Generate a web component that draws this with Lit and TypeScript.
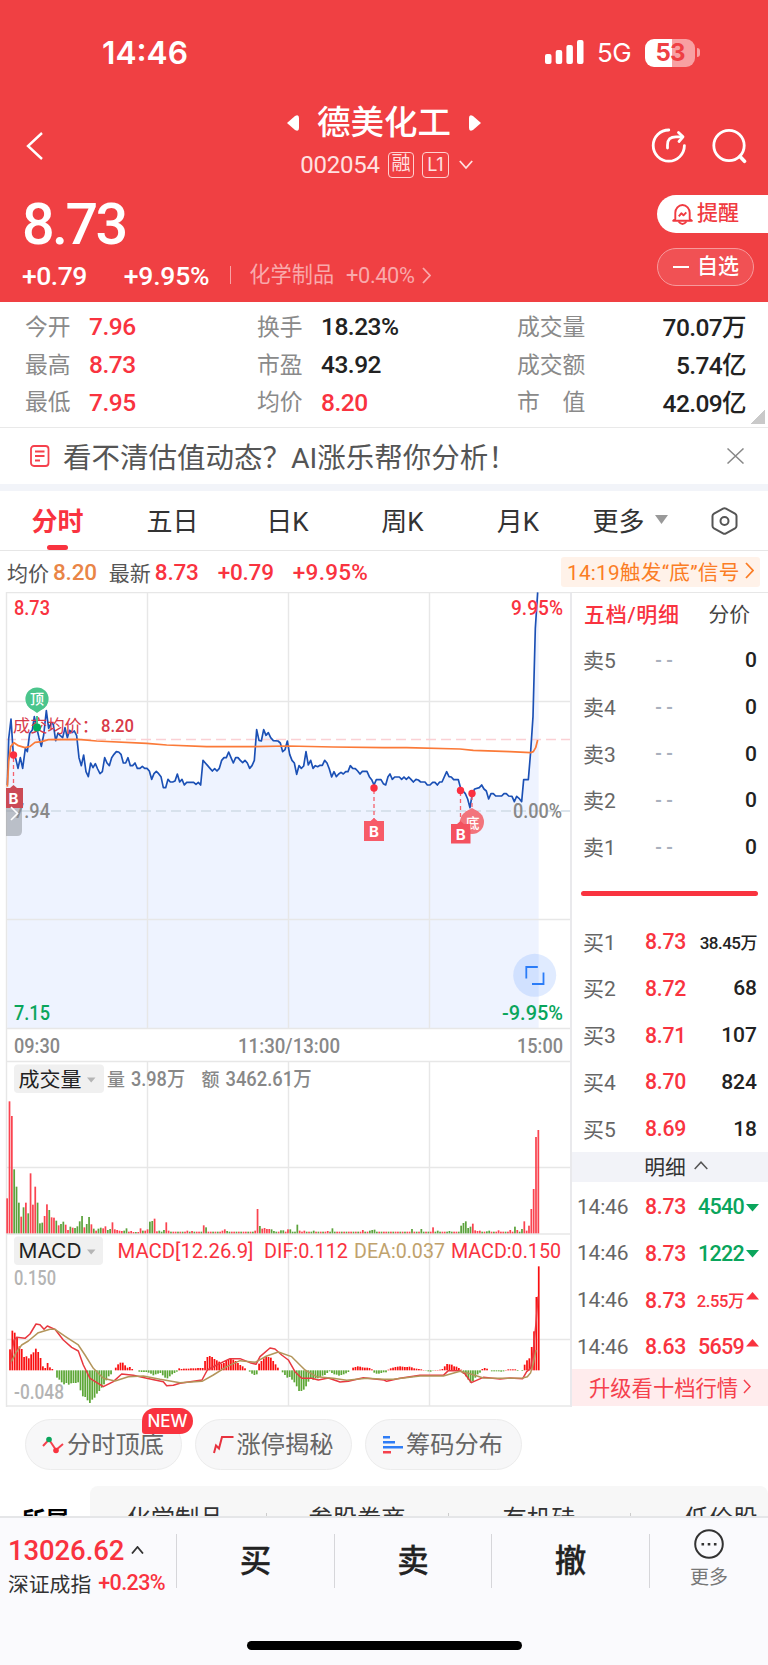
import { LitElement, html, svg, css } from 'lit';
import { customElement } from 'lit/decorators.js';

const PRICE =
  '22,600 26,462 33,402 40,508 47,520 54,550 61,518 68,550 76,490 82,500 89,445 97,435 103,395 110,428 117,458 124,484 131,450 139,377 146,430 153,415 160,418 167,467 174,444 181,452 188,458 195,428 202,458 209,436 216,443 223,438 230,452 237,518 244,542 251,510 258,560 265,575 272,534 279,548 286,536 293,552 300,566 307,560 314,518 321,534 328,542 335,518 342,508 349,500 356,501 363,508 370,534 377,534 384,518 391,542 398,542 405,534 412,550 420,550 427,544 434,550 441,550 448,558 455,583 462,566 469,559 476,566 483,575 490,608 497,608 504,583 511,591 518,591 525,588 532,567 539,591 546,583 553,600 560,592 581,592 588,598 595,592 602,600 609,526 616,534 623,542 630,550 637,558 644,551 651,558 658,550 665,526 672,518 679,518 686,501 693,518 700,534 707,518 714,518 721,526 728,533 735,526 742,534 749,550 756,542 763,526 770,434 777,466 784,468 791,434 798,451 805,443 812,458 820,467 834,468 841,474 848,500 855,494 862,468 869,508 876,526 883,534 890,568 897,542 904,550 911,543 918,500 925,540 932,526 939,550 946,542 953,545 960,541 967,541 974,526 981,534 988,552 995,576 1002,560 1009,575 1016,567 1023,562 1030,567 1037,560 1044,560 1051,542 1058,550 1066,551 1073,558 1080,567 1087,559 1101,559 1108,575 1115,584 1122,600 1129,584 1143,584 1150,596 1157,600 1164,575 1170,567 1177,583 1184,576 1198,576 1205,583 1212,576 1219,583 1226,576 1233,583 1240,591 1248,583 1255,585 1262,591 1275,591 1282,600 1290,600 1298,592 1305,592 1312,600 1319,591 1326,591 1340,560 1347,575 1354,576 1361,584 1375,584 1382,610 1389,618 1396,626 1403,642 1410,668 1417,625 1424,612 1438,608 1445,600 1452,612 1459,618 1466,642 1473,626 1480,626 1487,633 1505,633 1512,626 1519,626 1526,633 1536,634 1543,650 1550,634 1557,640 1565,650 1571,584 1585,584 1592,500 1599,395 1606,130 1613,22';
const AVERAGE =
  '22,605 26,530 32,485 42,473 55,482 75,488 90,484 105,472 125,470 145,464 235,463 290,468 440,475 500,480 620,485 740,485 862,483 1000,486 1152,488 1220,488 1380,492 1420,496 1530,500 1592,503 1600,500 1607,488 1613,465';
const DIF =
  '29,958 34,920 42,870 50,862 75,865 90,852 108,822 120,824 132,838 142,828 165,838 190,870 215,892 235,903 250,945 270,985 310,1010 340,995 365,972 400,976 440,985 490,995 500,1007 520,1006 540,1000 606,990 622,960 650,945 690,926 720,926 750,938 768,943 780,920 810,894 825,897 845,915 865,930 885,965 905,985 935,985 955,990 985,984 1020,996 1045,994 1090,983 1152,990 1160,994 1200,985 1260,976 1330,976 1345,962 1380,962 1395,972 1414,998 1450,982 1500,987 1530,984 1568,986 1580,965 1592,955 1600,900 1608,820 1614,740';
const DEA =
  '34,935 48,908 65,885 85,873 115,848 150,838 165,838 200,862 235,885 255,915 280,955 310,985 345,993 385,980 430,978 480,988 540,998 606,994 640,975 680,950 720,932 765,937 800,918 835,906 875,920 915,960 950,980 1000,985 1040,991 1100,985 1152,988 1180,988 1260,978 1330,978 1380,964 1405,970 1450,984 1500,985 1568,984 1582,980 1592,968 1600,940 1608,900';

/* The sign picks the colour: positive is a rise (red), negative is a fall (green). */
const VOLUME_HEAD = [
  105, 396, 352, -192, -140, -92, 50, -78, 92, -60, 180, 86, 140, -92, -30, -32, 52, 87, -70, 48, 47, -38, 24, -28, -35,
  26, 10, -20, 17, -16, -21, -36, -52, 18, -28, -49, 27, -14, 8, -14, -17, 15, 21, -10, -13, 33, 12, 10, 8, 7, -8, -15,
  5, 7, 4, -4, 4, 15, -8, 8, 12, -35, -37, 44, 6, -8, -5, -10, 33, 8,
];
const VOLUME_PEAKS: Record<number, number> = {
  77: 8, 79: 7, 84: 24, 85: -18, 92: 8, 93: 12, 94: -7, 106: 8, 107: 73, 108: -22, 109: 14, 110: 16, 111: 13, 112: 13,
  113: -12, 114: -7, 117: -9, 118: -9, 120: 12, 121: -12, 122: -5, 123: -5, 124: -26, 125: 8, 127: 8, 131: -8, 137: 7,
  139: -15, 152: 10, 155: -8, 156: -10, 157: -11, 173: -13, 177: -13, 182: 18, 184: -8, 189: -7, 194: -23, 195: -31,
  196: -36, 197: -16, 198: -20, 199: 29, 200: 9, 201: 7, 202: 8, 205: -6, 206: -8, 210: 9, 215: 10, 217: -20, 218: 10,
  219: -5, 220: -13, 221: 36, 222: 8, 223: 23, 224: 73, 225: 133, 226: 289, 227: 310,
};
const VOLUME = Array.from({ length: 228 }, (_, i) =>
  i < VOLUME_HEAD.length ? VOLUME_HEAD[i] : VOLUME_PEAKS[i] ?? ((i * 7) % 5 < 2 ? -5 : 5),
);
const MACD = [
  63, 119, 113, 100, 72, 64, 40, 42, 36, 48, 54, 65, 55, 37, 12, 7, 22, 9, 4, 0, -22, -28, -36, -42, -38, -43, -39, -38,
  -38, -36, -60, -78, -80, -90, -98, -88, -82, -70, -62, -52, -42, -30, -18, -12, 0, 8, 18, 23, 23, 15, 8, 10, 4, 0, 0,
  -4, -5, -5, -5, -7, -10, -15, -12, -10, -8, -15, -22, -24, -18, -12, -8, -4, 6, 4, 5, 5, 5, 6, 6, 6, 7, 7, 7, 28, 40,
  43, 40, 34, 30, 26, 20, 22, 30, 34, 34, 32, 28, 22, 16, 12, 6, 0, -4, -10, -14, -12, 20, 28, 36, 42, 40, 38, 28, 18,
  8, 0, -6, -14, -22, -20, -28, -36, -48, -62, -62, -58, -48, -34, -26, -28, -24, -24, -20, -16, -14, -8, -3, -8, -12,
  -13, -16, -14, -12, -9, -5, 0, 8, 10, 12, 11, 9, 8, 8, 7, 3, -7, -10, -10, -8, -6, -6, 2, 6, 8, 10, 11, 12, 11, 10,
  10, 11, 9, 6, 5, 4, 3, 1, -1, -3, -4, -1, 1, 1, 2, 4, 12, 19, 18, 17, 12, 11, 7, 2, -10, -18, -28, -37, -33, -22,
  -12, -7, 4, 7, 5, 0, -3, -3, -3, -3, -4, -3, 1, 3, 3, 3, 3, -2, 0, -2, 17, 30, 36, 70, 117, 220, 312,
];

const STATS = [
  ['今开', '7.96', '换手', '18.23%', '成交量', '70.07万'],
  ['最高', '8.73', '市盈', '43.92', '成交额', '5.74亿'],
  ['最低', '7.95', '均价', '8.20', '市　值', '42.09亿'],
];
const SELLS = ['卖5', '卖4', '卖3', '卖2', '卖1'];
const BUYS = [
  ['买1', '8.73', '38.45万'],
  ['买2', '8.72', '68'],
  ['买3', '8.71', '107'],
  ['买4', '8.70', '824'],
  ['买5', '8.69', '18'],
];
const TICKS = [
  ['14:46', '8.73', '4540', 'down'],
  ['14:46', '8.73', '1222', 'down'],
  ['14:46', '8.73', '2.55万', 'up'],
  ['14:46', '8.63', '5659', 'up'],
];

const chevron = (w: number, h: number, stroke = 1.8) => html`
  <svg width=${w} height=${h} viewBox="0 0 ${w} ${h}" fill="none" stroke="currentColor" stroke-width=${stroke}>
    <path d="M1 1 L${w - 1} ${h / 2} L1 ${h - 1}" />
  </svg>`;

@customElement('stock-header')
class StockHeader extends LitElement {
  static styles = css`
    :host { display: block; height: 302px; background: #f04043; color: #fff; font-family: Roboto, 'Noto Sans CJK SC', sans-serif; }
    svg { display: block; flex: none; }
    .status { display: flex; align-items: center; height: 105px; padding: 0 68px 0 102px; font-family: Inter, sans-serif; }
    .clock { flex: 1; font-size: 31.700px; font-weight: 600; }
    .net { font-size: 26px; margin: 0 14px 0 13px; letter-spacing: -.6px; }
    .battery { display: flex; align-items: center; justify-content: center; width: 50px; height: 28px; border-radius: 9px; background: linear-gradient(90deg, #fff 54%, #f8a0a2 54%); color: #ef4044; font-size: 24px; font-weight: 700; letter-spacing: -1px; }
    .nub { width: 3px; height: 9px; margin-left: 2px; border-radius: 0 3px 3px 0; background: #f8a0a2; }
    .nav { display: grid; grid-template-columns: 192px 1fr 192px; height: 82px; }
    .back { padding: 26px 0 0 26px; }
    .tools { display: flex; gap: 25px; justify-content: flex-end; padding: 22.500px 21px 0 0; }
    .name { display: flex; align-items: center; justify-content: center; gap: 18px; height: 35px; font-size: 33.500px; font-weight: 500; line-height: 35px; }
    .code { display: flex; align-items: center; justify-content: center; height: 49px; padding-left: 5px; font-size: 24px; letter-spacing: -.2px; color: #ffe1e1; }
    .box { display: flex; align-items: center; justify-content: center; box-sizing: border-box; width: 26px; height: 26px; border: 1.300px solid #ffd0d0; border-radius: 4px; font-size: 19px; line-height: 20px; margin-left: 8px; padding-bottom: 1px; }
    .box.l { width: 27px; margin-right: 10px; font: 18px Inter, sans-serif; padding: 0; }
    .quote { display: flex; justify-content: space-between; height: 115px; }
    .price { box-sizing: border-box; height: 71px; padding: 3px 0 0 22px; font-size: 57.500px; line-height: 70px; font-weight: 500; letter-spacing: -2.600px; }
    .line { display: flex; align-items: center; height: 34px; padding-left: 22px; font-size: 26.500px; font-weight: 500; }
    .up { letter-spacing: -.5px; }
    .pct { margin-left: 37px; letter-spacing: -.2px; }
    .sep { width: 1px; height: 18px; margin: 0 18px 0 21px; background: #f9a3a5; }
    .industry { font-size: 21.200px; font-weight: 400; color: #f9a9ab; margin-right: 12px; line-height: 28px; }
    .ipct { font-size: 21.800px; font-weight: 400; color: #f9a9ab; letter-spacing: -.4px; display: flex; align-items: center; gap: 7px; }
    .actions { display: flex; flex-direction: column; gap: 15px; padding-top: 8px; width: 111px; }
    .alert, .fav { display: flex; align-items: center; box-sizing: border-box; height: 38px; font-size: 21px; font-weight: 500; }
    .alert span, .fav span { line-height: 30px; padding-bottom: 2px; }
    .alert { gap: 4px; padding-left: 15px; border-radius: 19px 0 0 19px; background: #fff; color: #f03a40; }
    .fav { gap: 8px; width: 97px; padding-left: 15px; border: 1.500px solid #f79a9c; border-radius: 19px; background: #f15154; }
    .minus { width: 16px; height: 2px; background: #fff; }
  `;
  render() {
    return html`
      <div class="status">
        <span class="clock">14:46</span>
        <svg width="39" height="25" viewBox="0 0 39 25" fill="#fff">
          <rect x="0" y="14" width="6.500" height="10" rx="2" /><rect x="10.700" y="10" width="6.500" height="14" rx="2" />
          <rect x="21.400" y="5" width="6.500" height="19" rx="2" /><rect x="32" y="0" width="6.500" height="24" rx="2" />
        </svg>
        <span class="net">5G</span>
        <span class="battery">53</span><span class="nub"></span>
      </div>
      <div class="nav">
        <div class="back">
          <svg width="18" height="30" viewBox="0 0 18 30" fill="none" stroke="#fff" stroke-width="2.400"><path d="M16 2 L2 15 L16 28" /></svg>
        </div>
        <div>
          <div class="name">
            <svg width="12" height="16" viewBox="0 0 12 16"><path d="M0 8 L8 1 Q12 -1 12 3 V13 Q12 17 8 15Z" fill="#fff" /></svg>
            德美化工
            <svg width="12" height="16" viewBox="0 0 12 16"><path d="M12 8 L4 1 Q0 -1 0 3 V13 Q0 17 4 15Z" fill="#fff" /></svg>
          </div>
          <div class="code">
            002054<span class="box">融</span><span class="box l">L1</span>
            <svg width="14" height="10" viewBox="0 0 14 10" fill="none" stroke="#ffe1e1" stroke-width="1.800"><path d="M.8 1 L7 8 L13.200 1" /></svg>
          </div>
        </div>
        <div class="tools">
          <svg width="36" height="36" viewBox="0 0 36 36" fill="none" stroke="#fff" stroke-width="2.800" stroke-linecap="round" stroke-linejoin="round">
            <path d="M17.800 2 A15.600 15.600 0 1 0 33.400 17.600" /><path d="M16.500 20 V17 Q16.500 8.800 25 8.800 H30" /><path d="M27.500 4.500 L32 8.800 L28 13.500" />
          </svg>
          <svg width="35" height="36" viewBox="0 0 35 36" fill="none" stroke="#fff" stroke-width="2.800" stroke-linecap="round">
            <circle cx="17" cy="17.500" r="15.200" /><path d="M28 28.500 L32.500 33.300" stroke-width="3.600" />
          </svg>
        </div>
      </div>
      <div class="quote">
        <div>
          <div class="price">8.73</div>
          <div class="line">
            <span class="up">+0.79</span><span class="pct">+9.95%</span><i class="sep"></i>
            <span class="industry">化学制品</span><span class="ipct">+0.40% ${chevron(9, 17)}</span>
          </div>
        </div>
        <div class="actions">
          <div class="alert">
            <svg width="21" height="21" viewBox="0 0 21 21" fill="none" stroke="#f03a40" stroke-width="1.900" stroke-linejoin="round">
              <path d="M3.300 15 V8.800 A7.200 7.800 0 0 1 17.700 8.800 V15 L19.800 16.800 H1.200Z" /><path d="M6.500 17.500 Q10.500 22.500 14.500 17.500" /><path d="M6.800 12.300 L9.300 9.300 L11.500 11.300 L14.300 8.300" />
            </svg><span>提醒</span>
          </div>
          <div class="fav"><i class="minus"></i><span>自选</span></div>
        </div>
      </div>`;
  }
}

@customElement('stock-chart')
class StockChart extends LitElement {
  static styles = css`
    :host { display: block; width: 570px; height: 815px; }
    svg { display: block; }
    text { font-family: Roboto, 'Noto Sans CJK SC', sans-serif; font-size: 20px; }
    .grid { stroke: #e7e7e7; stroke-width: 1.400; fill: none; }
    .red { fill: #f9333f; }
    .green { fill: #0aa55c; }
    .grey { fill: #888; }
    .light { fill: #b4b4b4; }
    .tan { fill: #c0a26d; }
    .dark { fill: #222; }
    .avg { fill: #d83a49; font-size: 17.500px; }
    .mark { fill: #fff; font-size: 14px; font-weight: 500; text-anchor: middle; }
    .b { fill: #fff; font: 700 15px Inter, sans-serif; text-anchor: middle; }
    .chip { fill: #f0f0f0; }
    .m { font-weight: 500; }
    .zh { font-size: 18.500px; font-weight: 500; }
    .latin { font-family: Inter, sans-serif; }
  `;
  private bars(values: number[], x0: number, step: number, base: number, up: string, down: string, hang: boolean) {
    return values.map((v, i) => {
      if (v === 0) return null;
      const y = v < 0 && hang ? base : base - Math.abs(v);
      return svg`<rect x=${x0 + i * step - 2.600} y=${y} width="5.200" height=${Math.abs(v)} fill=${v > 0 ? up : down} />`;
    });
  }
  render() {
    const t = (s: string, x: number, y: number, w: number, c: string) =>
      svg`<text x=${x} y=${y} textLength=${w} lengthAdjust="spacingAndGlyphs" class=${c}>${s}</text>`;
    return html`
      <svg width="570" height="815" viewBox="0 592 570 815">
        <g transform="translate(0 585) scale(.33333)">
          <polygon points="${PRICE} 1616,22 1616,1329 22,1329" fill="#eef3ff" />
        </g>
        <path class="grid" d="M6.500 1407 V592.500 H571 M147.500 592 V1028 M288.500 592 V1028 M429.500 592 V1028 M147.500 1062 V1406 M288.500 1062 V1406 M429.500 1062 V1406 M6 701.500 H571 M6 919.500 H571 M6 1028.500 H571 M6 1061.500 H571 M6 1167.500 H571 M6 1234 H571 M6 1339.500 H571 M6 1406 H571" />
        <path d="M6 739.500 H571" stroke="#fbd0d4" stroke-width="1.500" stroke-dasharray="10 5" />
        <path d="M6 811 H571" stroke="#cfdce6" stroke-width="1.500" stroke-dasharray="10 5" />
        <rect class="chip" x="14" y="1064.500" width="90" height="28.500" rx="4" />
        <rect class="chip" x="14" y="1236.500" width="89" height="28.500" rx="4" />
        ${t('7.94', 14, 818, 36, 'grey m')} ${t('0.00%', 513, 818, 49, 'grey m')}
        <g transform="translate(0 1050) scale(.33333)">
          ${this.bars(VOLUME, 21.5, 7.02, 550, '#fa4450', '#5ca23c', false)}
          ${this.bars(MACD, 30, 7.05, 961, '#fa0f10', '#5da737', true)}
          <g fill="none" stroke-width="4.500" stroke-linejoin="round">
            <polyline points=${DIF} stroke="#e8383f" /><polyline points=${DEA} stroke="#b3955b" />
          </g>
        </g>
        <g transform="translate(0 585) scale(.33333)" fill="none" stroke-linejoin="round">
          <polyline points=${PRICE} stroke="#1b50b5" stroke-width="5" />
          <polyline points=${AVERAGE} stroke="#fb7a38" stroke-width="5.200" />
        </g>
        ${t('8.73', 14, 615, 36, 'red m')} ${t('9.95%', 511, 615, 52, 'red m')}
        ${t('成交均价：', 13, 732, 86, 'avg')} ${t('8.20', 101, 732, 33, 'avg m')}
        ${t('7.15', 14, 1020, 36, 'green m')} ${t('-9.95%', 502, 1020, 61, 'green m')}
        ${t('09:30', 14, 1053, 46, 'grey m')} ${t('11:30/13:00', 238, 1053, 102, 'grey m')} ${t('15:00', 517, 1053, 46, 'grey m')}

        <g stroke="#f5606c" stroke-width="1.300" stroke-dasharray="4 3">
          <path d="M13.500 758 V786" /><path d="M374 790 V820" /><path d="M460.500 792 V822" /><path d="M472 796 V810" />
        </g>
        <path d="M37 716 V724" stroke="#4bc58c" stroke-width="2" />
        <circle cx="37" cy="699" r="11.600" fill="#4bc58c" /><path d="M30 708 L37 713 L44 708Z" fill="#4bc58c" />
        <text class="mark" x="37" y="704.300">顶</text>
        <circle cx="37" cy="727.500" r="4" fill="#02ad5c" />
        <circle cx="13.500" cy="755" r="3.700" fill="#fb2f40" /><circle cx="374" cy="788" r="3.700" fill="#fb2f40" />
        <circle cx="460.500" cy="790.500" r="3.700" fill="#fb2f40" />
        <circle cx="472" cy="822" r="12" fill="#f2747c" /><path d="M465 812 L472 808 L479 812Z" fill="#f2747c" />
        <text class="mark" x="472.500" y="827.500">底</text>
        <circle cx="472" cy="793.500" r="3.700" fill="#fb2f40" />
        <path d="M6 788 H22 V831 Q22 836 17 836 H6Z" fill="#8f939a" opacity=".55" />
        <path d="M6 788 H10 L13.500 785 L17 788 H23 V808 H6Z" fill="#cb4a55" />
        <text class="b" x="13.500" y="803.500">B</text>
        <path d="M11 807 L17.500 813.500 L11 820" fill="none" stroke="#fff" stroke-width="1.600" />
        <path d="M364 821 H370.500 L374 818 L377.500 821 H384 V841 H364Z" fill="#f75b68" /><text class="b" x="374" y="836.500">B</text>
        <path d="M451 824 H457 L460.500 821 L464 824 H470.500 V843.500 H451Z" fill="#f4515f" /><text class="b" x="460.700" y="839.500">B</text>

        <circle cx="534.700" cy="975.300" r="21.500" fill="#3c82ff" opacity=".16" />
        <path d="M526.300 978.500 V967 H537.800 M532 984 H543.500 V972.500" fill="none" stroke="#2b7cf7" stroke-width="1.800" />

        ${t('成交量', 18.5, 1086.5, 63, 'dark')}
        <path d="M87 1077.500 H95.500 L91.200 1082.500Z M87 1249.500 H95.500 L91.200 1254.500Z" fill="#b5b5b5" />
        ${t('量', 107, 1085.5, 18, 'grey zh')} ${t('3.98万', 131, 1085.5, 54, 'grey m')}
        ${t('额', 201.5, 1085.5, 18, 'grey zh')} ${t('3462.61万', 225.5, 1085.5, 86, 'grey m')}
        ${t('MACD', 18.5, 1258, 63, 'dark latin')}
        ${t('MACD[12.26.9]', 117.5, 1258, 136, 'red')} ${t('DIF:0.112', 264, 1258, 84, 'red')}
        ${t('DEA:0.037', 354, 1258, 91, 'tan')} ${t('MACD:0.150', 451, 1258, 110, 'red')}
        ${t('0.150', 14, 1285, 42, 'light m')} ${t('-0.048', 14, 1399, 50, 'light m')}
      </svg>`;
  }
}

@customElement('order-book')
class OrderBook extends LitElement {
  static styles = css`
    :host { display: block; box-sizing: border-box; width: 198px; height: 815px; border-left: 2px solid #e9e9ec; border-top: 1.400px solid #e7e7e7; font-family: Roboto, 'Noto Sans CJK SC', sans-serif; color: #666; }
    svg { display: block; }
    .heads { display: flex; align-items: center; box-sizing: border-box; height: 44px; padding: 0 18px 5px 12px; font-size: 20.800px; justify-content: space-between; color: #444; }
    .on { color: #f9333f; font-weight: 500; font-size: 21px; letter-spacing: .7px; }
    .row { display: grid; grid-template-columns: 62px 1fr auto; align-items: center; height: 46.700px; padding: 0 11px 0 11px; font-size: 21px; }
    .name { padding-bottom: 2px; }
    .empty { padding-left: 10px; color: #a9b0bd; letter-spacing: 4px; font-size: 18px; font-weight: 700; }
    .p { color: #f9333f; font-size: 21.200px; font-weight: 500; letter-spacing: -.2px; }
    .q { color: #222; font-size: 21px; font-weight: 500; }
    .q.wide { font-size: 17px; letter-spacing: -.5px; }
    .ratio { height: 5.500px; margin: 20.500px 10px 22px 9px; border-radius: 3px; background: #f9333f; }
    .bar { display: flex; align-items: center; justify-content: center; gap: 8px; height: 30px; padding: 0 0 2px 12px; box-sizing: border-box; background: #f2f3f8; color: #333; font-size: 20.800px; }
    .tick { display: grid; grid-template-columns: 68px 1fr auto 13px; align-items: center; box-sizing: border-box; height: 46.700px; padding: 3px 9px 0 5px; font-size: 21px; letter-spacing: -.2px; }
    .tick .v { text-align: right; font-size: 21.500px; margin-right: 2px; font-weight: 500; letter-spacing: -.7px; }
    .tick .v.wide { font-size: 16.500px; letter-spacing: -.4px; }
    .up { color: #f9333f; }
    .down { color: #0aa55c; }
    .more { display: flex; align-items: center; gap: 5px; height: 37px; padding-left: 17px; box-sizing: border-box; padding-bottom: 1px; background: #ffeced; color: #f5414d; font-size: 21.300px; }
  `;
  render() {
    return html`
      <div class="heads"><span class="on">五档/明细</span><span>分价</span></div>
      ${SELLS.map((s) => html`<div class="row"><span class="name">${s}</span><span class="empty">--</span><span class="q">0</span></div>`)}
      <div class="ratio"></div>
      ${BUYS.map(([n, p, q]) => html`
        <div class="row"><span class="name">${n}</span><span class="p">${p}</span><span class="q ${q.includes('万') ? 'wide' : ''}">${q}</span></div>`)}
      <div class="bar">明细
        <svg width="14" height="9" viewBox="0 0 14 9" fill="none" stroke="#555" stroke-width="1.500"><path d="M.7 8 L7 1.200 L13.300 8" /></svg>
      </div>
      ${TICKS.map(([time, p, v, d]) => html`
        <div class="tick">
          <span>${time}</span><span class="p">${p}</span><span class="v ${d} ${v.includes('万') ? 'wide' : ''}">${v}</span>
          <svg class=${d} width="13" height="16" viewBox="0 0 13 16" fill="currentColor"><path d=${d === 'up' ? 'M0 7.5 L6.500 0 L13 7.5Z' : 'M0 5 H13 L6.5 12.5Z'} /></svg>
        </div>`)}
      <div class="more">升级看十档行情 ${chevron(8, 15, 1.5)}</div>`;
  }
}

@customElement('app-root')
class AppRoot extends LitElement {
  static styles = css`
    :host { display: flex; flex-direction: column; width: 768px; height: 1665px; overflow: hidden; background: #fff; color: #333; font-family: Roboto, 'Noto Sans CJK SC', sans-serif; }
    svg { display: block; flex: none; }
    .red { color: #f9333f; }
    .stats { display: grid; grid-template-columns: 64px 168px 64px 196px 80px 149px; grid-template-rows: repeat(3, 37.700px); box-sizing: border-box; height: 126px; padding: 6px 22px 0 25px; align-items: center; border-bottom: 1.500px solid #e9e9e9; font-size: 24.500px; font-weight: 500; letter-spacing: -.5px; color: #222; }
    .stats b { font-weight: 400; font-size: 22.800px; letter-spacing: 0; color: #8a8a8a; padding-bottom: 3px; white-space: nowrap; }
    .stats .red { color: #f9333f; }
    .stats .end { text-align: right; letter-spacing: -.6px; padding-bottom: 2px; }
    .corner { width: 15px; height: 14px; margin: -18px 3px 4px auto; background: linear-gradient(135deg, transparent 50%, #c9c9c9 50%); }
    .notice { display: flex; align-items: center; height: 56px; padding: 0 24px 0 30px; font-size: 28.500px; color: #555; }
    .notice span { flex: 1; margin-left: 13px; padding-bottom: 2px; }
    .gap { height: 7px; background: #f2f4f9; }
    .tabs { display: grid; grid-template-columns: 115px 115px 115px 115px 116px 108px 1fr; box-sizing: border-box; height: 60px; border-bottom: 1.500px solid #e6e6e6; font-size: 26px; color: #333; }
    .tab { display: flex; flex-direction: column; align-items: center; justify-content: center; position: relative; padding-bottom: 2px; }
    .tab.more { flex-direction: row; gap: 10px; }
    .tab.set { padding: 0 3px 0 0; }
    .tab.on { color: #f9333f; font-weight: 700; }
    .tab.on::after { content: ''; position: absolute; bottom: 0; width: 21px; height: 5px; border-radius: 2.500px; background: #f9333f; }
    .info { display: flex; align-items: center; height: 41px; padding: 0 8px 0 7px; font-size: 21px; color: #555; }
    .info .num { font-size: 22.500px; margin: 0 12px 0 4px; font-weight: 500; letter-spacing: -.2px; }
    .info .orange { color: #e98547; }
    .info .g { margin: 0 15px 0 4px; }
    .info .w { letter-spacing: .3px; }
    .signal { display: flex; align-items: center; gap: 5px; box-sizing: border-box; width: 199px; height: 30px; margin-left: auto; padding: 0 0 2px 6px; border-radius: 3px; background: #fff2e9; color: #fb7d25; font-size: 20.700px; letter-spacing: .25px; white-space: nowrap; }
    .board { display: flex; height: 815px; flex: none; }
    .chips { display: flex; gap: 13px; height: 79px; box-sizing: border-box; padding: 12px 25px 0; flex: none; }
    .chip { display: flex; align-items: center; justify-content: center; gap: 3px; position: relative; box-sizing: border-box; width: 157px; height: 51px; border: 1.500px solid #ececec; border-radius: 26px; background: #f7f7f8; color: #666; font-size: 24.200px; line-height: 30px; padding-right: 1px; }
    .chip b { font-weight: 400; }
    .new { position: absolute; left: 116px; top: -12px; width: 51px; height: 26px; border-radius: 13px 13px 13px 3px; background: #f9333f; color: #fff; font: 500 17px/26px Inter, sans-serif; text-align: center; }
    .sectors { display: flex; height: 31px; flex: none; overflow: hidden; font-size: 24.300px; line-height: 66px; }
    .belong { width: 90px; padding-left: 22px; box-sizing: border-box; color: #000; font-weight: 700; font-size: 23.500px; line-height: 70px; }
    .strip { display: grid; grid-template-columns: repeat(4, 182px); margin-right: -50px; width: 678px; border-radius: 8px 8px 0 0; background: #f7f7f7; overflow: hidden; flex: none; }
    .strip span { text-align: center; background: linear-gradient(#ccc, #ccc) 176px 27px / 1px 30px no-repeat; padding-right: 12px; white-space: nowrap; }
    .foot { flex: 1; display: flex; flex-direction: column; justify-content: space-between; align-items: center; box-sizing: border-box; border-top: 2px solid #e5e6e8; margin-top: -1px; background: #fafafd; padding-bottom: 15px; z-index: 1; }
    .dock { display: grid; grid-template-columns: 176px 158px 157px 158px 119px; width: 768px; padding-top: 15.500px; }
    .act { display: flex; align-items: center; justify-content: center; height: 54px; border-left: 1.500px solid #d6d6da; font-size: 31.500px; font-weight: 500; -webkit-text-stroke: .3px #222; line-height: 40px; padding-top: 3px; color: #222; box-sizing: border-box; }
    .act.last { flex-direction: column; font-size: 19px; font-weight: 400; -webkit-text-stroke: 0; color: #777; gap: 5px; line-height: 28px; padding: 0; }
    .index { padding-left: 8px; }
    .big { display: flex; align-items: center; gap: 7px; height: 33px; font-size: 27.500px; font-weight: 500; letter-spacing: -.1px; color: #f9333f; }
    .sub { display: flex; align-items: center; gap: 7px; height: 32px; font-size: 20.800px; white-space: nowrap; }
    .sub .red { font-size: 21.500px; font-weight: 500; letter-spacing: -.6px; }
    .home { width: 275px; height: 9px; border-radius: 5px; background: #000; }
  `;
  render() {
    return html`
      <stock-header></stock-header>
      <div class="stats">
        ${STATS.map((r, i) => html`
          <b>${r[0]}</b><span class="red">${r[1]}</span><b>${r[2]}</b><span class=${i === 2 ? 'red' : ''}>${r[3]}</span><b>${r[4]}</b><span class="end">${r[5]}</span>`)}
      </div>
      <div class="corner"></div>
      <div class="notice">
        <svg width="20" height="22" viewBox="0 0 20 22" fill="none" stroke="#f5414d" stroke-width="1.800"><rect x="1" y="1" width="17.500" height="20" rx="3" /><path d="M5 6.500 H14.500 M5 11 H14.500 M5 15.500 H10" /></svg>
        <span>看不清估值动态？AI涨乐帮你分析！</span>
        <svg width="17" height="16" viewBox="0 0 17 16" stroke="#888" stroke-width="1.500"><path d="M.5 .5 L16.500 15.500 M16.500 .5 L.5 15.500" /></svg>
      </div>
      <div class="gap"></div>
      <div class="tabs">
        <div class="tab on">分时</div><div class="tab">五日</div><div class="tab">日K</div><div class="tab">周K</div><div class="tab">月K</div>
        <div class="tab more">更多<svg width="13" height="9" viewBox="0 0 13 9"><path d="M0 0 H13 L6.500 9Z" fill="#999" /></svg></div>
        <div class="tab set"><svg width="27" height="28" viewBox="0 0 27 28" fill="none" stroke="#555" stroke-width="2"><path d="M12 1.700 Q13.500 .9 15 1.700 L24 6.700 Q25.500 7.600 25.500 9 V19 Q25.500 20.400 24 21.300 L15 26.300 Q13.500 27.100 12 26.300 L3 21.300 Q1.500 20.400 1.500 19 V9 Q1.500 7.600 3 6.700Z" /><circle cx="13.500" cy="14" r="4" /></svg></div>
      </div>
      <div class="info">
        均价<span class="num orange">8.20</span>最新<span class="num red g">8.73</span><span class="num red g">+0.79</span><span class="num red g w">+9.95%</span>
        <div class="signal">14:19触发“底”信号${chevron(9, 17)}</div>
      </div>
      <div class="board"><stock-chart></stock-chart><order-book></order-book></div>
      <div class="chips">
        <div class="chip"><svg width="22" height="18" viewBox="0 0 22 18" fill="none" stroke-width="2"><path d="M1 10 L7 3.500 L14 14 L21 8" stroke="#f5414d" /><circle cx="7" cy="3.500" r="2.800" fill="#0aa55c" /><circle cx="14" cy="14.500" r="2.800" fill="#f9333f" /></svg><b>分时顶底</b><span class="new">NEW</span></div>
        <div class="chip"><svg width="21" height="19" viewBox="0 0 21 19" fill="none" stroke="#e8333f" stroke-width="2"><path d="M1 18 L3 10.500 L6 13.500 L9 2 H20.500" /></svg><b>涨停揭秘</b></div>
        <div class="chip"><svg width="20" height="18" viewBox="0 0 20 18"><path d="M0 0 H7 V2.500 H0Z M0 5 H12 V7.500 H0Z M0 10 H20 V12.500 H0Z" fill="#2f7df6" /><path d="M0 15 H8 V17.500 H0Z" fill="#f5414d" /></svg><b>筹码分布</b></div>
      </div>
      <div class="sectors">
        <div class="belong">所属</div>
        <div class="strip"><span>化学制品</span><span>参股券商</span><span>有机硅</span><span>低价股</span></div>
      </div>
      <div class="foot">
        <div class="dock">
          <div class="index">
            <div class="big">13026.62<svg width="13" height="8" viewBox="0 0 13 8" fill="none" stroke="#333" stroke-width="1.800"><path d="M1 7.500 L6.500 1 L12 7.500" /></svg></div>
            <div class="sub">深证成指<span class="red">+0.23%</span></div>
          </div>
          <div class="act">买</div><div class="act">卖</div><div class="act">撤</div>
          <div class="act last">
            <svg width="30" height="30" viewBox="0 0 30 30"><circle cx="15" cy="15" r="13.800" fill="none" stroke="#333" stroke-width="2" /><path d="M7.500 14 h2.600 v2.600 h-2.600z M13.700 14 h2.600 v2.600 h-2.600z M19.900 14 h2.600 v2.600 h-2.600z" fill="#333" /></svg>
            更多
          </div>
        </div>
        <div class="home"></div>
      </div>`;
  }
}
